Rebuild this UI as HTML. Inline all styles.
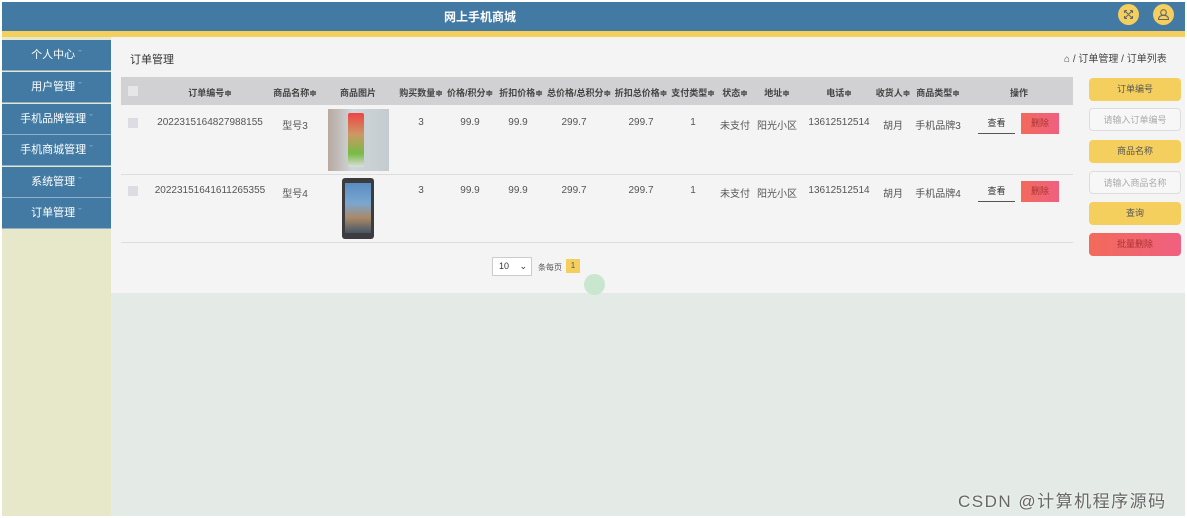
<!DOCTYPE html><html><head><meta charset="utf-8"><style>
*{margin:0;padding:0;box-sizing:border-box}
body{width:1187px;height:518px;position:relative;background:#fff;font-family:"Liberation Sans","Noto Sans CJK SC",sans-serif;font-size:10px;color:#555;overflow:hidden}
.a{position:absolute}
.c{position:absolute;transform:translateX(-50%);white-space:nowrap}
.nav{position:absolute;left:2px;width:109px;height:31px;background:#427aa3;color:#fff;font-size:11px;text-align:center;line-height:31px;border-bottom:1px solid #8fb0c8}
.h{font-weight:bold;color:#444;font-size:9px}
.btn{position:absolute;left:1089px;width:92px;height:23px;border-radius:4px;text-align:center;line-height:23px;font-size:9px}
</style></head><body>
<div class="a" style="left:2px;top:2px;width:1183px;height:29px;background:#437aa3"></div>
<div class="a" style="left:2px;top:31px;width:1183px;height:6px;background:#f5cf5d"></div>
<div class="c" style="left:480px;top:8px;color:#fff;font-size:12px;font-weight:bold">网上手机商城</div>
<svg class="a" style="left:1118px;top:4px" width="21" height="21" viewBox="0 0 21 21"><circle cx="10.5" cy="10.5" r="10.5" fill="#f5cf5d"/><path d="M6.5 6.5l8 8M14.5 6.5l-8 8M6.5 6.5h2.5M6.5 6.5v2.5M14.5 6.5h-2.5M14.5 6.5v2.5M6.5 14.5h2.5M6.5 14.5v-2.5M14.5 14.5h-2.5M14.5 14.5v-2.5" stroke="#666" stroke-width="1.1" fill="none"/></svg>
<svg class="a" style="left:1153px;top:4px" width="21" height="21" viewBox="0 0 21 21"><circle cx="10.5" cy="10.5" r="10.5" fill="#f5cf5d"/><circle cx="10.5" cy="8.5" r="2.8" stroke="#666" stroke-width="1.1" fill="none"/><path d="M5.5 15.5h10c0-3-2.2-4.2-5-4.2s-5 1.2-5 4.2z" stroke="#666" stroke-width="1.1" fill="none"/></svg>
<div class="a" style="left:2px;top:37px;width:109px;height:479px;background:#e7e7c9"></div>
<div class="nav" style="top:40px">个人中心 <span style="color:#8fb0c8">ˇ</span></div>
<div class="nav" style="top:72px">用户管理 <span style="color:#8fb0c8">ˇ</span></div>
<div class="nav" style="top:104px">手机品牌管理 <span style="color:#8fb0c8">ˇ</span></div>
<div class="nav" style="top:135px">手机商城管理 <span style="color:#8fb0c8">ˇ</span></div>
<div class="nav" style="top:167px">系统管理 <span style="color:#8fb0c8">ˇ</span></div>
<div class="nav" style="top:198px">订单管理 <span style="color:#8fb0c8">ˇ</span></div>
<div class="a" style="left:111px;top:37px;width:1074px;height:256px;background:#f4f4f5"></div>
<div class="a" style="left:111px;top:293px;width:1074px;height:223px;background:#e4ebe6"></div>
<div class="a" style="left:130px;top:51px;font-size:11px;color:#333">订单管理</div>
<div class="a" style="left:1064px;top:50px;font-size:10px;color:#444">⌂ / 订单管理 / 订单列表</div>
<div class="a" style="left:121px;top:77px;width:952px;height:28px;background:#d1d1d3"></div>
<div class="a" style="left:128px;top:86px;width:10px;height:10px;background:#e6e6ea"></div>
<div class="a" style="left:121px;top:174px;width:952px;height:1px;background:#ddd"></div>
<div class="a" style="left:121px;top:242px;width:952px;height:1px;background:#ddd"></div>
<div class="a h" style="top:86px;left:0;width:1187px;height:12px">
<span class="c" style="left:210px">订单编号≑</span><span class="c" style="left:295px">商品名称≑</span><span class="c" style="left:358px">商品图片</span><span class="c" style="left:421px">购买数量≑</span><span class="c" style="left:470px">价格/积分≑</span><span class="c" style="left:521px">折扣价格≑</span><span class="c" style="left:579px">总价格/总积分≑</span><span class="c" style="left:641px">折扣总价格≑</span><span class="c" style="left:693px">支付类型≑</span><span class="c" style="left:735px">状态≑</span><span class="c" style="left:777px">地址≑</span><span class="c" style="left:839px">电话≑</span><span class="c" style="left:893px">收货人≑</span><span class="c" style="left:938px">商品类型≑</span><span class="c" style="left:1019px">操作</span></div>
<div class="a" style="left:328px;top:109px;width:61px;height:62px;background:linear-gradient(90deg,#b7a9a0,#cfd6da 40%,#c4ccd0);"><div class="a" style="left:20px;top:4px;width:16px;height:54px;background:linear-gradient(#e44 0,#c96 40%,#7b4 75%,#ddd 100%);border-radius:2px"></div></div>
<div class="a" style="left:342px;top:178px;width:32px;height:61px;background:#3c3c3e;border-radius:3px"><div class="a" style="left:3px;top:5px;width:26px;height:50px;background:linear-gradient(#5a8cc0,#7aa7d0 40%,#a86 70%,#456)"></div></div>
<div class="a" style="top:117px;left:0;width:1187px;font-size:10px">
<span class="a" style="left:128px;top:1px;width:10px;height:10px;background:#dcdce2"></span>
<span class="c" style="left:210px">2022315164827988155</span><span class="c" style="left:295px">型号3</span><span class="c" style="left:421px">3</span><span class="c" style="left:470px">99.9</span><span class="c" style="left:518px">99.9</span><span class="c" style="left:574px">299.7</span><span class="c" style="left:641px">299.7</span><span class="c" style="left:693px">1</span><span class="c" style="left:735px">未支付</span><span class="c" style="left:777px">阳光小区</span><span class="c" style="left:839px">13612512514</span><span class="c" style="left:893px">胡月</span><span class="c" style="left:938px">手机品牌3</span></div>
<div class="a" style="top:185px;left:0;width:1187px;font-size:10px">
<span class="a" style="left:128px;top:1px;width:10px;height:10px;background:#dcdce2"></span>
<span class="c" style="left:210px">2022315164161126535​5</span><span class="c" style="left:295px">型号4</span><span class="c" style="left:421px">3</span><span class="c" style="left:470px">99.9</span><span class="c" style="left:518px">99.9</span><span class="c" style="left:574px">299.7</span><span class="c" style="left:641px">299.7</span><span class="c" style="left:693px">1</span><span class="c" style="left:735px">未支付</span><span class="c" style="left:777px">阳光小区</span><span class="c" style="left:839px">13612512514</span><span class="c" style="left:893px">胡月</span><span class="c" style="left:938px">手机品牌4</span></div>
<div class="a" style="left:978px;top:113px;width:37px;height:21px;border-bottom:1px solid #555;text-align:center;line-height:20px;font-size:9px;color:#333">查看</div>
<div class="a" style="left:1021px;top:113px;width:38px;height:21px;background:linear-gradient(90deg,#f26a5a,#f06080);text-align:center;line-height:21px;font-size:9px;color:#a33">删除</div>
<div class="a" style="left:978px;top:181px;width:37px;height:21px;border-bottom:1px solid #555;text-align:center;line-height:20px;font-size:9px;color:#333">查看</div>
<div class="a" style="left:1021px;top:181px;width:38px;height:21px;background:linear-gradient(90deg,#f26a5a,#f06080);text-align:center;line-height:21px;font-size:9px;color:#a33">删除</div>
<div class="a" style="left:492px;top:257px;width:40px;height:19px;border:1px solid #ccc;background:#fff;font-size:9px;line-height:17px;padding-left:6px;color:#333">10 <span style="float:right;margin-right:4px">⌄</span></div>
<div class="a" style="left:538px;top:262px;font-size:8px">条每页</div>
<div class="a" style="left:566px;top:259px;width:14px;height:14px;background:#f5cf5d;font-size:8px;text-align:center;line-height:14px;color:#555">1</div>
<div class="a" style="left:584px;top:274px;width:21px;height:21px;border-radius:50%;background:#c9e6cf"></div>
<div class="btn" style="top:78px;background:#f5cf5d;color:#555">订单编号</div>
<div class="btn" style="top:108px;border:1px solid #ddd;background:#f7f7f7;color:#aaa">请输入订单编号</div>
<div class="btn" style="top:140px;background:#f5cf5d;color:#555">商品名称</div>
<div class="btn" style="top:171px;border:1px solid #ddd;background:#f7f7f7;color:#aaa">请输入商品名称</div>
<div class="btn" style="top:202px;background:#f5cf5d;color:#555">查询</div>
<div class="btn" style="top:233px;background:linear-gradient(90deg,#f26a5a,#f06080);color:#a33">批量删除</div>
<div class="a" style="left:958px;top:487px;font-size:17px;letter-spacing:1.5px;color:#666;text-shadow:0 0 2px #fff;white-space:nowrap">CSDN @计算机程序源码</div>
</body></html>
